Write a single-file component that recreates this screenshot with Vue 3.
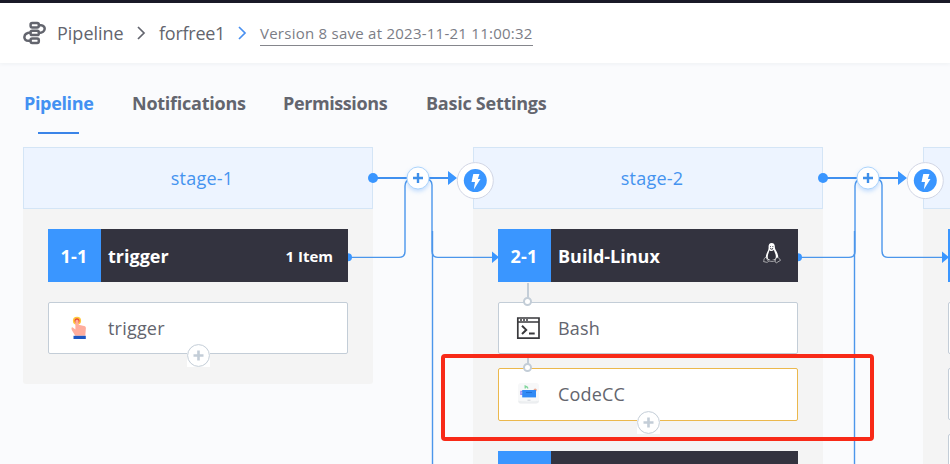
<script setup>
const tabs = ['Pipeline', 'Notifications', 'Permissions', 'Basic Settings']

const stages = [
  {
    id: 1,
    name: 'stage-1',
    trunk: 'right',
    jobs: [
      { id: '1-1', name: 'trigger', note: '1 Item', atoms: [{ name: 'trigger', icon: 'touch', add: true }] }
    ]
  },
  {
    id: 2,
    name: 'stage-2',
    trunk: 'left',
    jobs: [
      {
        id: '2-1',
        name: 'Build-Linux',
        os: true,
        atoms: [
          { name: 'Bash', icon: 'bash', link: true },
          { name: 'CodeCC', icon: 'code', link: true, active: true, add: true }
        ]
      },
      { id: '', name: '', atoms: [] }
    ]
  },
  {
    id: 3,
    name: '',
    jobs: [{ id: '', name: '', atoms: [{ name: '' }, { name: '' }, { name: '' }] }]
  }
]
</script>

<template>
  <div class="page">
    <header class="crumbs">
      <svg class="logo" width="24" height="24" viewBox="0 0 24 24">
        <g fill="none" stroke="#63656e" stroke-width="2.5">
          <rect x="7.6" y="2.1" width="8.2" height="4.300" rx="1.600" />
          <rect x="7.6" y="9.800" width="8.200" height="4.300" rx="1.600" />
          <rect x="7.6" y="17.600" width="8.200" height="4.300" rx="1.600" />
          <path d="M15.800 4.300h2.200c5.200.2 5.200 7.600-2.200 7.700M7.600 11.600C-.3 12-.3 19.700 5.400 19.800h2.200" />
        </g>
      </svg>
      <span class="crumb first">Pipeline</span>
      <svg class="chev" width="10" height="16" viewBox="0 0 10 16"><path d="M2 2l6 6-6 6" fill="none" stroke="#63656e" stroke-width="1.7" /></svg>
      <span class="crumb second">forfree1</span>
      <svg class="chev" width="10" height="16" viewBox="0 0 10 16"><path d="M2 2l6 6-6 6" fill="none" stroke="#4a90f0" stroke-width="1.7" /></svg>
      <span class="version">Version 8 save at 2023-11-21 11:00:32</span>
    </header>

    <nav class="tabs">
      <span v-for="(tab, i) in tabs" :key="tab" class="tab" :class="['tab-' + i, { current: i === 0 }]">{{ tab }}</span>
    </nav>

    <main class="flow">
      <section v-for="stage in stages" :key="stage.id" class="stage">
        <div class="stage-head">{{ stage.name }}</div>
        <div class="stage-body">
          <div v-for="(job, j) in stage.jobs" :key="j" class="job">
            <div class="job-head">
              <span class="job-index">{{ job.id }}</span>
              <span class="job-name">{{ job.name }}</span>
              <span v-if="job.note" class="job-note">{{ job.note }}</span>
              <svg v-if="job.os" class="penguin" width="18" height="22" viewBox="0 0 18 22">
                <path d="M5.6 6C5.3 2.6 6.2 1 8.6 1s3.5 1.8 3.3 4.8c.2 2.4 3.4 5 3.3 9.2L12.6 18H5.4L2.8 15.2C2.9 11.4 5.5 9 5.6 6z" fill="#fff" />
                <path d="M6.5 8.2c1.3 1.2 2.8 1.1 4.4-.1.8 2.7 2.5 4.7 1.7 8.2-.5 2-6.4 2.4-7.6.2-.9-2.9.9-5.8 1.5-8.3z" fill="#30303b" />
                <path d="M7 4.6h.8m1.6 0h.9M7.2 6.5l1.4.7 1.5-.7" stroke="#30303b" fill="none" />
                <path d="M2.7 15.1l2.7 4.3c-.8 1.8-2.8.4-4.8.2.6-1.4-.2-2.7 2.1-4.5zM15.1 15.3l2.5 3-4.2 2.5c-1.3-.2-1.3-1.5-.9-4.4zM5.7 18.8c2.1.8 4.5.8 6.5 0" stroke="#ddd" stroke-width=".7" fill="#30303b" />
              </svg>
            </div>
            <div v-for="(atom, a) in job.atoms" :key="a" class="atom" :class="{ active: atom.active }">
              <svg v-if="atom.icon === 'touch'" class="icon" width="24" height="24" viewBox="0 0 24 24">
                <circle cx="11" cy="4.8" r="4.1" fill="#ffc83d" />
                <circle cx="11" cy="4.8" r="2.5" fill="#e94a35" />
                <path d="M9.400 5.200c0-2 3.200-2 3.200 0v3.600l5.500 1.200c1.200.3 1.900 1 1.800 2.200l-.6 7.500H9.200L5.800 14c-.9-2.500.3-3.600 1.600-2l2 1.500z" fill="#ffad9d" />
                <path d="M7.5 19.800h12.300v3.200H7.500z" fill="#1d56c2" />
              </svg>
              <svg v-else-if="atom.icon === 'bash'" class="icon" width="24" height="24" viewBox="0 0 24 24">
                <path d="M1.800 2h21.200v20.200H1.800zM1.800 6h21.200" fill="none" stroke="#39393c" stroke-width="1.7" />
                <path d="M4 4h2m1 0h2m1 0h2" stroke="#39393c" stroke-width="1.3" />
                <path d="M6 9.800l4.200 4.100L6 18M13 17.500h5.700" fill="none" stroke="#39393c" stroke-width="2" />
              </svg>
              <svg v-else-if="atom.icon === 'code'" class="icon" width="24" height="24" viewBox="0 0 24 24">
                <rect x="2" y="1" width="21" height="20.5" rx="3" fill="#f7f8f9" />
                <path d="M2.200 18.500c0 2.500 1.300 3 3 3H20c2 0 3-1 3-3-3 1.200-18 1.200-20.800 0z" fill="#eceef0" />
                <path d="M9.200 6.500V4l2 1.100.8 1.400" fill="none" stroke="#7fd69a" stroke-width="1.3" />
                <path d="M7 9.500H4.900v2.800H7" fill="none" stroke="#9a8cf2" stroke-width="1.4" />
                <circle cx="19.200" cy="8" r="1.600" fill="#e9a48e" />
                <rect x="6.200" y="8" width="13.800" height="7.400" fill="#318af5" />
                <path d="M10 10.500h6" stroke="#206fd5" />
                <path d="M11.500 18.200h3" stroke="#ccd1d8" />
              </svg>
              <span class="atom-name">{{ atom.name }}</span>
              <span v-if="atom.link" class="link"></span>
              <span v-if="atom.add" class="add">
                <svg width="23" height="23" viewBox="0 0 23 23">
                  <circle cx="11.5" cy="11.5" r="10.9" fill="#fff" stroke="#c3cdd7" />
                  <path d="M11.5 6.500v10M6.500 11.500h10" stroke="#c3cdd7" stroke-width="2.600" />
                </svg>
              </span>
            </div>
          </div>
        </div>

        <svg v-if="stage.trunk" class="wires" width="130" height="317" viewBox="0 0 130 317">
          <g fill="none" stroke="#4b96eb" stroke-width="1.4">
            <path d="M2 110.4h49q6 0 6-6V39q0-5 5-7" />
            <path d="M76 31q8 1 8 7v66q0 6.400 6 6.400h57" />
            <path v-if="stage.trunk === 'right'" d="M84.500 84v233" />
            <path v-else d="M56.500 84v233" />
          </g>
          <path d="M25 31h80" stroke="#4090ef" stroke-width="2" />
          <circle cx="25" cy="31" r="5" fill="#3a96ff" />
          <path d="M0 106.300a4 4 0 0 1 0 8zM100 24l9 7-9 7zM144 104.500l7 5.700-7 5.700z" fill="#3a96ff" />
        </svg>
        <svg v-if="stage.trunk" class="insert" width="34" height="34" viewBox="0 0 34 34">
          <circle cx="17" cy="17" r="11" fill="#fff" stroke="#abd3fb" />
          <path d="M17 12v10M12 17h10" stroke="#3e8fe9" stroke-width="2.400" />
        </svg>
        <svg v-if="stage.id > 1" class="bolt" width="38" height="38" viewBox="0 0 38 38">
          <circle cx="19.300" cy="18.600" r="18" fill="#fff" stroke="#d2d6e5" />
          <circle cx="19.300" cy="18.600" r="11.500" fill="#3a96ff" />
          <path d="M17.300 12.100h6.200l-1.700 5h2.700l-6.700 10.500 1.200-7.500h-3.500z" fill="#fff" />
        </svg>
      </section>
      <div class="marker"></div>
    </main>
  </div>
</template>

<style>
body {
  background: #fafbfd;
}
</style>

<style scoped>
.page {
  box-sizing: border-box;
  width: 950px;
  height: 464px;
  overflow: hidden;
  border-top: 3px solid #191928;
  background: #fafbfd;
  color: #63656e;
  font-family: "Open Sans", "Noto Sans", sans-serif;
  font-size: 18px;
}
.page *,
.page *::after {
  box-sizing: border-box;
}
svg {
  display: block;
  flex: none;
}
.crumbs {
  display: flex;
  align-items: center;
  height: 60px;
  padding-left: 23px;
  background: #fff;
  box-shadow: 0 1px 4px rgba(40, 60, 90, 0.06);
  white-space: nowrap;
}
.crumb {
  line-height: 24px;
}
.first {
  width: 67px;
  margin: 0 12px 0 10px;
}
.second {
  width: 65px;
  margin: 0 13px 0 13px;
  letter-spacing: -0.25px;
}
.version {
  width: 273px;
  height: 22px;
  margin: 3px 0 0 13px;
  border-bottom: 1px solid #85868c;
  color: #7b7d86;
  font-size: 15px;
  line-height: 19px;
  letter-spacing: 0.25px;
}
.tabs {
  display: flex;
  gap: 38px;
  height: 84px;
  padding: 27px 0 0 24px;
  font-weight: 700;
  line-height: 26px;
  letter-spacing: -0.25px;
  white-space: nowrap;
}
.tab {
  display: flex;
  flex-direction: column;
  height: 44px;
}
.tab-0 { width: 70px; letter-spacing: -0.35px; }
.tab-1 { width: 113px; }
.tab-2 { width: 105px; letter-spacing: -0.4px; }
.current {
  color: #4391f2;
}
.current::after {
  width: 41px;
  height: 2px;
  margin: auto 0 0 14px;
  background: #3a84e8;
  content: "";
}
.flow {
  position: relative;
  display: flex;
  align-items: flex-start;
  gap: 100px;
  padding-left: 23px;
}
.stage {
  position: relative;
  flex: none;
  width: 350px;
}
.stage-head {
  height: 62px;
  padding-left: 8px;
  border: 1px solid #d4e5f6;
  background: #edf4ff;
  color: #4593ef;
  line-height: 61px;
  letter-spacing: 0.2px;
  text-align: center;
}
.stage-body {
  display: flex;
  flex-direction: column;
  gap: 30px;
  padding: 20px 25px 30px;
  border-radius: 0 0 3px 3px;
  background: #f4f4f4;
}
.job {
  display: flex;
  flex-direction: column;
  gap: 14px;
}
.job-head {
  display: flex;
  align-items: center;
  height: 53px;
  margin-bottom: 6px;
  padding-right: 15px;
  background: #33333f;
  color: #fff;
  font-weight: 700;
}
.job-index {
  width: 53px;
  height: 53px;
  margin-right: 7px;
  padding-right: 1px;
  background: #3a96ff;
  line-height: 54px;
  letter-spacing: 0.2px;
  text-align: center;
}
.job-name {
  flex: 1;
}
.job-note {
  font-size: 15px;
}
.penguin {
  margin-top: -5px;
  margin-right: 2px;
}
.atom {
  position: relative;
  display: flex;
  align-items: center;
  height: 52px;
  padding-left: 17px;
  border: 1px solid #c3cdd7;
  border-radius: 2px;
  background: #fff;
}
.atom-name {
  letter-spacing: 0.2px;
}
.atom.active {
  height: 53px;
  padding-bottom: 1px;
  border-color: #ebb84d;
}
.icon {
  margin-right: 18px;
}
.link {
  position: absolute;
  top: -20px;
  left: 28px;
  width: 2px;
  height: 15px;
  background: #c3cdd7;
}
.active .link {
  top: -14px;
  height: 9px;
}
.link::after {
  position: absolute;
  bottom: -8px;
  left: -4px;
  width: 9px;
  height: 9px;
  border: 2px solid #c3cdd7;
  border-radius: 50%;
  background: #fff;
  content: "";
}
.add {
  position: absolute;
  bottom: -14px;
  left: 138px;
  background: #fff;
}
.wires {
  position: absolute;
  top: 0;
  left: 325px;
  z-index: 1;
  overflow: visible;
}
.insert {
  position: absolute;
  top: 14px;
  left: 378px;
  z-index: 2;
  filter: drop-shadow(0 2px 2px rgba(58, 150, 255, 0.3));
}
.bolt {
  position: absolute;
  top: 15px;
  left: -17px;
  z-index: 2;
}
.marker {
  position: absolute;
  top: 207px;
  left: 441px;
  z-index: 3;
  width: 433px;
  height: 87px;
  border: 4px solid #f82a18;
  border-radius: 4px;
}
</style>
